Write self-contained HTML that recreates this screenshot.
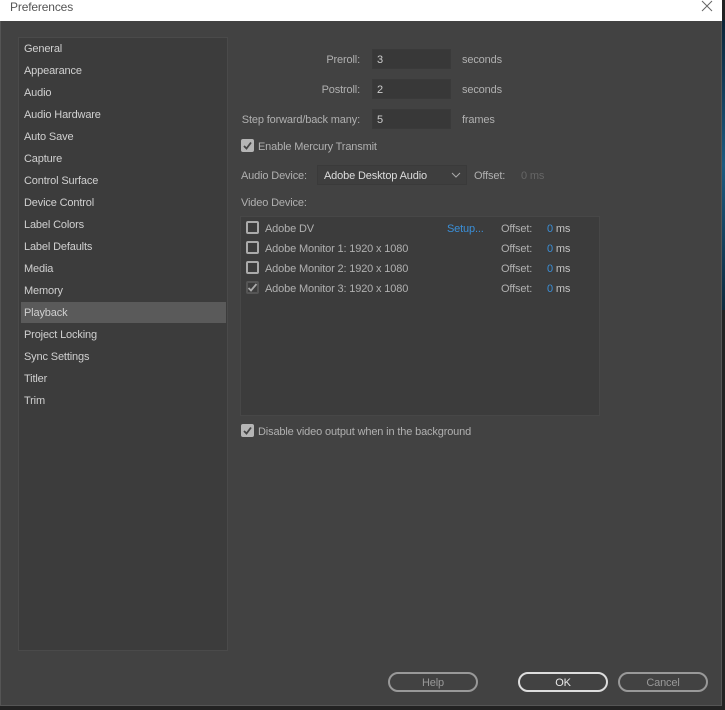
<!DOCTYPE html>
<html><head><style>
*{margin:0;padding:0;box-sizing:border-box}
body{width:725px;height:710px;background:#222;position:relative;overflow:hidden;font-family:"Liberation Sans",sans-serif;font-size:11px;color:#c4c4c4;letter-spacing:-0.15px}
.abs{position:absolute}
#bgr{left:722px;top:20px;width:3px;height:290px;background:linear-gradient(#0c2438,#1d5a80,#0e2a3e)}
#dlg{left:0;top:0;width:722px;height:706px;background:#424242;border:1px solid #555}
#title{left:0;top:0;width:722px;height:21px;background:#fff;color:#555;font-size:12px;padding:1px 0 0 10px;line-height:13px}
#side{left:18px;top:37px;width:210px;height:614px;background:#3c3c3c;border:1px solid #4a4a4a}
.it{position:absolute;left:5px;width:202px;height:21px;line-height:23px;padding-left:0;color:#d0d0d0}
.sel{background:#5a5a5a;left:2px;padding-left:3px;width:205px}
.lbl{color:#b0b0b0;text-align:right}
.t{margin-top:1px}
.inp{background:#383838;border:1px solid #3a3a3a;height:20px;width:79px;line-height:20px;padding-left:4px;color:#ccc}
.cb{width:13px;height:13px;border:2px solid #aaa;border-radius:2px}
.cbc{width:13px;height:13px;background:#b5b5b5;border-radius:2px}
.btn{height:20px;border:2px solid #999;border-radius:10px;text-align:center;line-height:18px;color:#999;width:90px}
.blue{color:#3a8fd8}
</style></head><body>
<div id="bgr" class="abs"></div>
<div id="dlg" class="abs"></div>
<div id="title" class="abs">Preferences</div>
<svg class="abs" style="left:701px;top:0" width="12" height="12"><path d="M1 1L11 11M11 1L1 11" stroke="#666" stroke-width="1"/></svg>
<div id="side" class="abs">
<div class="it" style="top:0">General</div>
<div class="it" style="top:22px">Appearance</div>
<div class="it" style="top:44px">Audio</div>
<div class="it" style="top:66px">Audio Hardware</div>
<div class="it" style="top:88px">Auto Save</div>
<div class="it" style="top:110px">Capture</div>
<div class="it" style="top:132px">Control Surface</div>
<div class="it" style="top:154px">Device Control</div>
<div class="it" style="top:176px">Label Colors</div>
<div class="it" style="top:198px">Label Defaults</div>
<div class="it" style="top:220px">Media</div>
<div class="it" style="top:242px">Memory</div>
<div class="it sel" style="top:264px">Playback</div>
<div class="it" style="top:286px">Project Locking</div>
<div class="it" style="top:308px">Sync Settings</div>
<div class="it" style="top:330px">Titler</div>
<div class="it" style="top:352px">Trim</div>
</div>
<div class="abs lbl" style="left:230px;width:130px;top:54px">Preroll:</div>
<div class="abs inp" style="left:372px;top:49px">3</div>
<div class="abs lbl" style="left:462px;top:54px">seconds</div>
<div class="abs lbl" style="left:230px;width:130px;top:84px">Postroll:</div>
<div class="abs inp" style="left:372px;top:79px">2</div>
<div class="abs lbl" style="left:462px;top:84px">seconds</div>
<div class="abs lbl" style="left:230px;width:130px;top:114px">Step forward/back many:</div>
<div class="abs inp" style="left:372px;top:109px">5</div>
<div class="abs lbl" style="left:462px;top:114px">frames</div>
<div class="abs cbc" style="left:241px;top:139px"></div>
<svg class="abs" style="left:241px;top:139px" width="13" height="13"><path d="M3 7L5.5 9.5L10 3.5" stroke="#444" stroke-width="1.8" fill="none"/></svg>
<div class="abs lbl" style="left:258px;top:141px">Enable Mercury Transmit</div>
<div class="abs lbl" style="left:241px;top:170px">Audio Device:</div>
<div class="abs" style="left:317px;top:165px;width:150px;height:20px;border:1px solid #3a3a3a;background:#3e3e3e;color:#ddd;padding-left:6px;line-height:20px">Adobe Desktop Audio</div>
<svg class="abs" style="left:451px;top:172px" width="10" height="6"><path d="M1 1L5 5L9 1" stroke="#aaa" fill="none"/></svg>
<div class="abs lbl" style="left:474px;top:170px">Offset:</div>
<div class="abs" style="left:521px;top:170px;color:#666">0 ms</div>
<div class="abs lbl" style="left:241px;top:197px">Video Device:</div>
<div class="abs" style="left:240px;top:216px;width:360px;height:200px;background:#3c3c3c;border:1px solid #474747"></div>
<div class="abs cb" style="left:246px;top:221px"></div>
<div class="abs lbl" style="left:265px;top:223px">Adobe DV</div>
<div class="abs blue" style="left:447px;top:223px">Setup...</div>
<div class="abs cb" style="left:246px;top:241px"></div>
<div class="abs lbl" style="left:265px;top:243px">Adobe Monitor 1: 1920 x 1080</div>
<div class="abs cb" style="left:246px;top:261px"></div>
<div class="abs lbl" style="left:265px;top:263px">Adobe Monitor 2: 1920 x 1080</div>
<div class="abs cb" style="left:246px;top:281px;border-color:#555"></div>
<svg class="abs" style="left:246px;top:281px" width="13" height="13"><path d="M2.5 7L5 9.5L10.5 3" stroke="#aaa" stroke-width="1.8" fill="none"/></svg>
<div class="abs lbl" style="left:265px;top:283px">Adobe Monitor 3: 1920 x 1080</div>
<div class="abs lbl" style="left:501px;top:223px">Offset:</div><div class="abs" style="left:547px;top:223px"><span class="blue">0</span> ms</div>
<div class="abs lbl" style="left:501px;top:243px">Offset:</div><div class="abs" style="left:547px;top:243px"><span class="blue">0</span> ms</div>
<div class="abs lbl" style="left:501px;top:263px">Offset:</div><div class="abs" style="left:547px;top:263px"><span class="blue">0</span> ms</div>
<div class="abs lbl" style="left:501px;top:283px">Offset:</div><div class="abs" style="left:547px;top:283px"><span class="blue">0</span> ms</div>
<div class="abs cbc" style="left:241px;top:424px"></div>
<svg class="abs" style="left:241px;top:424px" width="13" height="13"><path d="M3 7L5.5 9.5L10 3.5" stroke="#444" stroke-width="1.8" fill="none"/></svg>
<div class="abs lbl" style="left:258px;top:426px">Disable video output when in the background</div>
<div class="abs btn" style="left:388px;top:672px">Help</div>
<div class="abs btn" style="left:518px;top:672px;border-color:#ddd;color:#e8e8e8">OK</div>
<div class="abs btn" style="left:618px;top:672px">Cancel</div>
</body></html>
